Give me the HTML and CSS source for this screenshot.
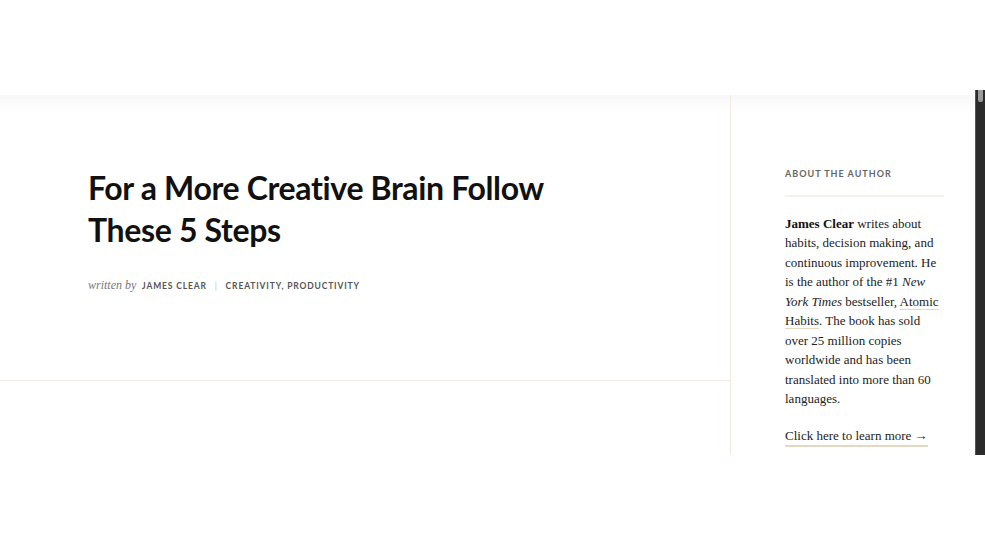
FILE: index.html
```html
<!DOCTYPE html>
<html lang="en">
<head>
<meta charset="utf-8">
<title>For a More Creative Brain Follow These 5 Steps</title>
<link rel="stylesheet" href="styles.css">
</head>
<body>
<div class="top"></div>
<div class="frame">
  <div class="page">
    <main class="main">
      <header class="post-header">
        <h1 class="title">For a More Creative Brain Follow<br>These 5 Steps</h1>
        <p class="meta"><span class="by">written by</span> <a class="tag" href="#">JAMES CLEAR</a> <span class="sep">|</span> <a class="tag" href="#">CREATIVITY</a>, <a class="tag" href="#">PRODUCTIVITY</a></p>
      </header>
    </main>
    <aside class="sidebar">
      <h2 class="label">ABOUT THE AUTHOR</h2>
      <p class="bio"><strong>James Clear</strong> writes about<br>habits, decision making, and<br>continuous improvement. He<br>is the author of the #1 <em>New<br>York Times</em> bestseller, <a class="ul" href="#">Atomic<br>Habits</a>. The book has sold<br>over 25 million copies<br>worldwide and has been<br>translated into more than 60<br>languages.</p>
      <p class="more"><a class="ul" href="#">Click here to learn more →</a></p>
    </aside>
  </div>
  <div class="scrollbar"><div class="thumb"></div></div>
</div>
</body>
</html>
```
FILE: styles.css
```css
html, body {
  margin: 0;
  padding: 0;
  background: #fff;
}
.top {
  height: 90px;
}
.frame {
  display: flex;
  height: 365px;
  overflow: hidden;
}
.page {
  flex: 1;
  display: flex;
  background: linear-gradient(to bottom, #fff 0, #fff 5px, #f7f7f7 5px, #fff 22px, #fff 100%);
}
.main {
  width: 730px;
  border-right: 1px solid #f1e9df;
  margin-top: 5px;
}
.post-header {
  height: 286px;
  border-bottom: 1px solid #efebe4;
  padding: 72px 0 0 88px;
  box-sizing: border-box;
}
.title {
  margin: 0;
  font-family: "Lato", sans-serif;
  font-weight: 700;
  font-size: 32px;
  line-height: 42px;
  color: #111;
  letter-spacing: -0.35px;
}
.meta {
  margin: 27px 0 0;
  font-family: "Lato", sans-serif;
  font-size: 8.5px;
  color: #555;
  letter-spacing: 0.85px;
  font-weight: 700;
}
.by {
  font-family: "Liberation Serif", serif;
  font-style: italic;
  font-weight: 400;
  font-size: 12px;
  letter-spacing: 0;
  color: #777;
  margin-right: 3px;
}
.tag {
  color: #555;
  text-decoration: none;
}
.sep {
  color: #bbb;
  font-weight: 400;
  margin: 0 5px;
}
.sidebar {
  flex: 1;
  padding: 78px 0 0 54px;
  box-sizing: border-box;
}
.label {
  margin: 0;
  width: 159px;
  padding-bottom: 16px;
  border-bottom: 2px solid #f4f2ea;
  font-family: "Lato", sans-serif;
  font-size: 9px;
  font-weight: 700;
  letter-spacing: 1px;
  color: #666;
}
.bio {
  margin: 17px 0 0;
  font-family: "Liberation Serif", serif;
  font-size: 13px;
  line-height: 19.45px;
  color: #222;
  white-space: nowrap;
}
.bio strong {
  color: #111;
}
.ul {
  color: #222;
  text-decoration: none;
  border-bottom: 1px solid #e3d9c3;
}
.more {
  margin: 17px 0 0;
  font-family: "Liberation Serif", serif;
  font-size: 13px;
  line-height: 19.5px;
}
.more .ul {
  padding-bottom: 2px;
  border-bottom-width: 2px;
}
.scrollbar {
  width: 10px;
  background: #2b2b2b;
  border-left: 1px solid #555;
  box-sizing: border-box;
  padding: 0 2px 0 2px;
}
.thumb {
  height: 12px;
  background: #9a9a9a;
  border-radius: 0 0 2px 2px;
}
```
